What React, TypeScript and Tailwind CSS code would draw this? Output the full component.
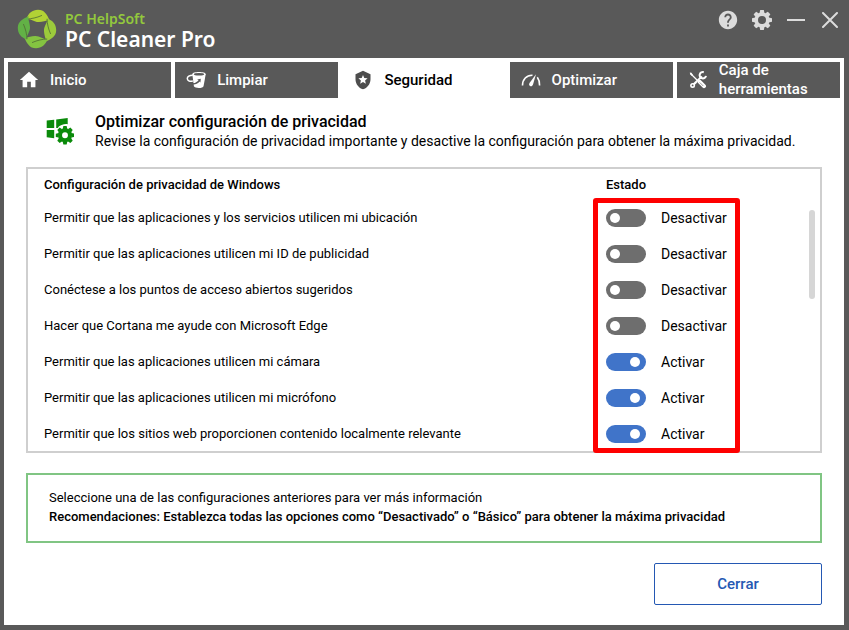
import { useState } from 'react'
import type { ReactNode } from 'react'
import { MdHelp, MdHome, MdLocalPolice } from 'react-icons/md'

const settings = [
  { label: 'Permitir que las aplicaciones y los servicios utilicen mi ubicación', on: false },
  { label: 'Permitir que las aplicaciones utilicen mi ID de publicidad', on: false },
  { label: 'Conéctese a los puntos de acceso abiertos sugeridos', on: false },
  { label: 'Hacer que Cortana me ayude con Microsoft Edge', on: false },
  { label: 'Permitir que las aplicaciones utilicen mi cámara', on: true },
  { label: 'Permitir que las aplicaciones utilicen mi micrófono', on: true },
  { label: 'Permitir que los sitios web proporcionen contenido localmente relevante', on: true }
]

const tabs: { name: string; icon: ReactNode }[] = [
  { name: 'Inicio', icon: <MdHome className="size-[22px]" /> },
  { name: 'Limpiar', icon: <BucketIcon /> },
  { name: 'Seguridad', icon: <MdLocalPolice className="size-5" /> },
  { name: 'Optimizar', icon: <GaugeIcon /> },
  { name: 'Caja de herramientas', icon: <ToolsIcon /> }
]

const leaves = [
  { angle: 0, color: '#b2d235' },
  { angle: 90, color: '#9ccb3b' },
  { angle: 180, color: '#84c341' },
  { angle: 270, color: '#62b146' }
]

function Logo() {
  return (
    <svg viewBox="0 0 40 40" className="size-10 shrink-0" aria-hidden="true">
      {leaves.map((leaf) => (
        <g key={leaf.angle} transform={`rotate(${leaf.angle} 20 20)`}>
          <path
            d="M9.500 10C11 4.500 15.500 .8 21 .8C27.500 .8 30 5.500 32.800 11.800C30 10.500 27 12.800 22 13C16.500 13.200 14.500 9.300 9.500 10Z"
            fill={leaf.color}
          />
          <path d="M9.800 10C14.500 9.800 19.500 8.800 25 6.400" fill="none" stroke="#4f6b34" strokeWidth="0.8" />
        </g>
      ))}
    </svg>
  )
}

/* Eight-tooth gear centred on 0,0 with an outer radius of 10 */
function GearShape({ hole }: { hole: number }) {
  return (
    <g>
      <circle r={(7.6 + hole) / 2} fill="none" stroke="currentColor" strokeWidth={7.6 - hole} />
      {[0, 45, 90, 135, 180, 225, 270, 315].map((angle) => (
        <path key={angle} d="M-2.500 -6.800L-1.800 -10H1.800L2.500 -6.800Z" fill="currentColor" transform={`rotate(${angle})`} />
      ))}
    </g>
  )
}

function BucketIcon() {
  return (
    <svg viewBox="0 0 20 18" className="h-[18px] w-5" fill="none" aria-hidden="true">
      <path d="M6.300 3.200C6.300 1.700 9.500 1 13 1s6.700 .7 6.700 2.200L17.600 15c-.3 1.400-2.500 2-4.700 2-2.200 0-4.500-.5-5-1.700Z" fill="currentColor" />
      <ellipse cx="13" cy="3.300" rx="5.200" ry="1.200" fill="#595959" />
      <path d="M6.800 4.200C3.500 4.200 1.300 5.600 1.300 7.600c0 2 2.200 3.100 5.500 2.500" stroke="currentColor" strokeWidth="1.500" />
      <path d="M3.500 12.800C7.500 13.300 11 12.200 13.200 9.900" stroke="#595959" strokeWidth="1.500" />
      <path d="M11.300 8.600L14.800 7.800L14.400 11.600Z" fill="#595959" />
    </svg>
  )
}

function GaugeIcon() {
  return (
    <svg viewBox="0 0 20 14" className="h-[14px] w-5" aria-hidden="true">
      <path d="M1.500 12.500C1.500 6.500 5.500 2 11.500 2.200M16.300 4.300C18 6.500 18.600 9.500 18.600 12.500" fill="none" stroke="currentColor" strokeWidth="1.600" />
      <path d="M15 1.300L12 11.500C11.500 13.200 10 13.600 9 13c-1.200-.8-1.200-2.100-.3-3.300Z" fill="currentColor" />
    </svg>
  )
}

function ToolsIcon() {
  return (
    <svg viewBox="0 0 18 18" className="size-[18px]" fill="none" aria-hidden="true">
      <path d="M3.500 14.500L13 5.500" stroke="currentColor" strokeWidth="2.400" />
      <circle cx="3.600" cy="14.400" r="2.500" fill="currentColor" />
      <circle cx="3.600" cy="14.400" r="0.900" fill="#595959" />
      <path d="M14.800 1.200a3.200 3.200 0 1 0 2.200 3.600" stroke="currentColor" strokeWidth="2" />
      <path d="M2 3L8.500 9.500" stroke="currentColor" strokeWidth="1.300" />
      <path d="M.8 1.600L2.500 1.800 4 4 3 5 1.200 3.600Z" fill="currentColor" />
      <path d="M9.500 9.700L14.500 14.700" stroke="#595959" strokeWidth="5" />
      <path d="M10.500 10.700L15 15.200" stroke="currentColor" strokeWidth="4" strokeLinecap="round" />
      <path d="M10.800 11.500L14.300 15" stroke="#595959" strokeWidth="0.600" />
    </svg>
  )
}

function WindowsGearIcon() {
  return (
    <svg viewBox="0 0 28 28" className="size-7 shrink-0 text-[#0a8a0a]" aria-hidden="true">
      <path
        d="M.7 3.600L8.200 2.700V11H.7ZM10.200 2.400L21.700 .9V7.200C17.500 6.600 15.500 8.400 14 8.700C12.800 9.200 12.300 10.200 11.800 11H10.200ZM.7 13H8.200V21.300L.7 20.300Z"
        fill="currentColor"
      />
      <g transform="translate(19 18.300) scale(0.920)">
        <GearShape hole={3.200} />
      </g>
    </svg>
  )
}

function TitleBar() {
  return (
    <header className="flex h-[58px] items-start justify-between pr-[2px] pl-[13px]">
      <div className="flex gap-2 pt-[9px]">
        <Logo />
        <div className="font-['Noto_Sans'] font-semibold whitespace-nowrap">
          <p className="text-[14px] leading-5 text-[#93c83d]">PC HelpSoft</p>
          <p className="text-[21px] leading-5 text-white">PC Cleaner Pro</p>
        </div>
      </div>
      <div className="flex gap-[10px] pt-2 text-[#dcdcdc]">
        <button aria-label="Ayuda" className="grid size-6 place-items-center">
          <MdHelp className="size-[22px]" />
        </button>
        <button aria-label="Configuración" className="grid size-6 place-items-center">
          <svg viewBox="-10 -10 20 20" className="size-5" aria-hidden="true">
            <GearShape hole={4} />
          </svg>
        </button>
        <button aria-label="Minimizar" className="grid size-6 place-items-center">
          <svg viewBox="0 0 18 18" className="size-[18px]" aria-hidden="true">
            <path d="M0 9H18" stroke="currentColor" strokeWidth="2" />
          </svg>
        </button>
        <button aria-label="Cerrar ventana" className="grid size-6 place-items-center">
          <svg viewBox="0 0 16 16" className="size-4" aria-hidden="true">
            <path d="M1 1L15 15M15 1L1 15" stroke="currentColor" strokeWidth="2" strokeLinecap="round" />
          </svg>
        </button>
      </div>
    </header>
  )
}

export default function App() {
  const [active, setActive] = useState('Seguridad')
  const [states, setStates] = useState(settings.map((s) => s.on))

  const toggle = (index: number) => setStates(states.map((on, i) => (i === index ? !on : on)))

  return (
    <div className="flex min-h-screen flex-col bg-[#595959] pr-[5px] pb-[5px] pl-1 font-[Roboto,sans-serif] text-black">
      <TitleBar />

      <main className="flex-1 bg-white">
        {/* Tabs */}
        <nav className="grid grid-cols-5 gap-1 p-1">
          {tabs.map((tab) => (
            <button
              key={tab.name}
              onClick={() => setActive(tab.name)}
              className={`flex h-9 items-center gap-2 pl-2 text-left text-[15px] leading-[19px] font-medium ${
                active === tab.name ? 'bg-white text-black' : 'bg-[#595959] text-white'
              }`}
            >
              <span className={`grid w-[26px] shrink-0 place-items-center ${active === tab.name ? 'text-[#4d4d4d]' : ''}`}>
                {tab.icon}
              </span>
              {tab.name}
            </button>
          ))}
        </nav>

        <div className="px-[22px]">
          {/* Section heading */}
          <div className="flex items-center gap-[21px] pt-[10px] pl-5">
            <WindowsGearIcon />
            <div>
              <h1 className="text-base leading-5 font-medium">Optimizar configuración de privacidad</h1>
              <p className="text-[14px] leading-[18px]">
                Revise la configuración de privacidad importante y desactive la configuración para obtener la máxima privacidad.
              </p>
            </div>
          </div>

          {/* Settings table */}
          <section className="relative mt-[17px] h-[286px] border-2 border-[#cfcfcf]">
            <table className="w-full table-fixed text-left">
              <thead>
                <tr className="h-[31px] text-[13px]">
                  <th className="pl-4 font-medium">Configuración de privacidad de Windows</th>
                  <th className="w-[214px] font-medium">Estado</th>
                </tr>
              </thead>
              <tbody>
                {settings.map((setting, index) => (
                  <tr key={setting.label} className="h-9">
                    <td className="pl-4 text-[13px]">
                      <label htmlFor={`setting-${index}`}>{setting.label}</label>
                    </td>
                    <td>
                      <div className="flex items-center gap-[15px] text-[14px]">
                        <input
                          id={`setting-${index}`}
                          type="checkbox"
                          role="switch"
                          checked={states[index]}
                          onChange={() => toggle(index)}
                          className="h-[18px] w-10 appearance-none rounded-full bg-[#6e6e6e] p-1 before:block before:size-[10px] before:rounded-full before:bg-white checked:bg-[#4074c9] checked:before:ml-5"
                        />
                        {states[index] ? 'Activar' : 'Desactivar'}
                      </div>
                    </td>
                  </tr>
                ))}
              </tbody>
            </table>
            <div className="absolute top-[41px] right-[5px] h-[89px] w-[6px] rounded-full bg-[#d6d6d6]" />
            <div className="pointer-events-none absolute top-[29px] right-20 h-[255px] w-[147px] rounded-[3px] border-5 border-[#fe0000]" />
          </section>

          {/* Recommendations */}
          <section className="mt-5 h-[70px] border-2 border-[#80c583] px-[21px] py-[13px] text-[13px] leading-[19px]">
            <p>Seleccione una de las configuraciones anteriores para ver más información</p>
            <p className="font-medium">
              Recomendaciones: Establezca todas las opciones como “Desactivado” o “Básico” para obtener la máxima privacidad
            </p>
          </section>

          <div className="mt-5 flex justify-end">
            <button className="h-[42px] w-[168px] rounded-[2px] border border-[#2458b3] text-[15px] font-medium text-[#2458b3]">
              Cerrar
            </button>
          </div>
        </div>
      </main>
    </div>
  )
}
